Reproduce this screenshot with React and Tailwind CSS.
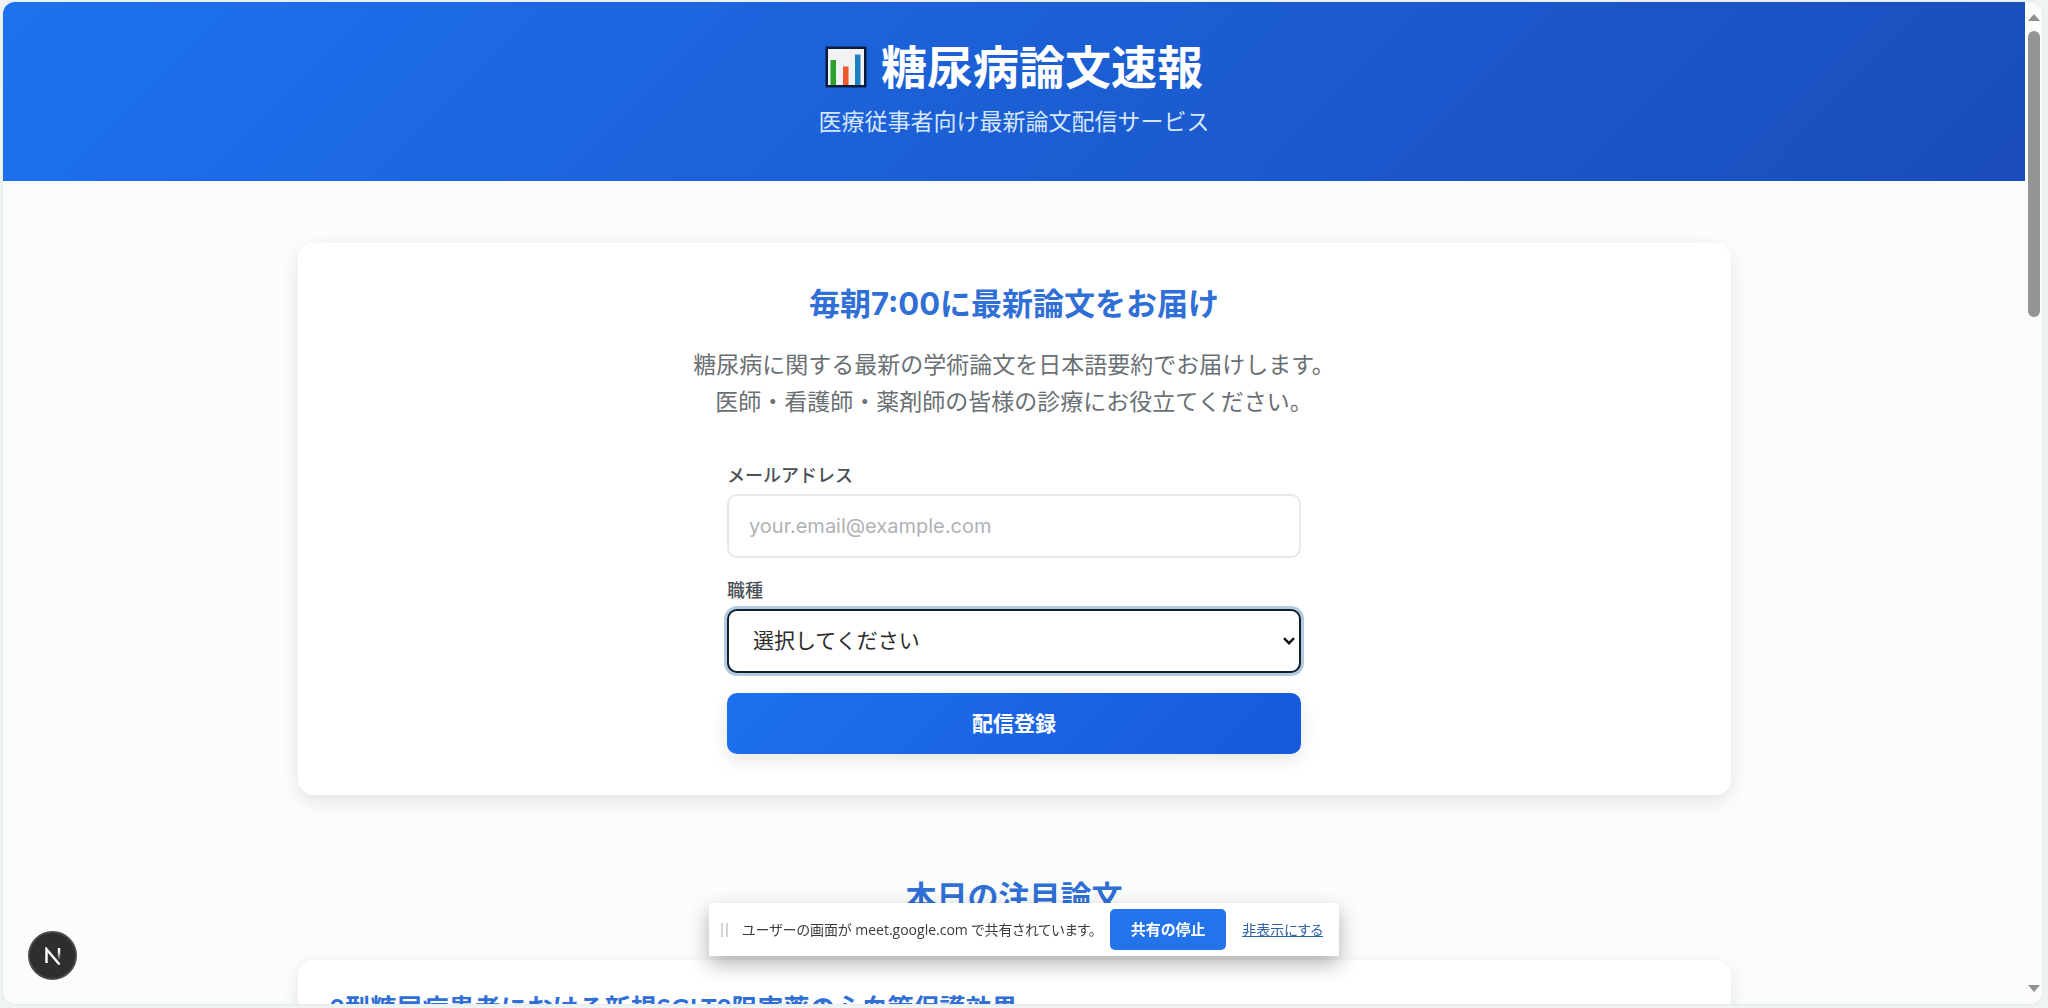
import React, { useState } from "react";

const ROLES = ["医師", "看護師", "薬剤師"];

function ChartIcon() {
  return (
    <svg viewBox="0 0 42 42" className="w-[42px] h-[42px] shrink-0" aria-hidden="true">
      <rect x="0.5" y="0.5" width="41" height="41" rx="1" fill="#0c1a3c" />
      <rect x="3" y="3" width="36" height="36" fill="#f1f2f3" />
      <rect x="5.5" y="14" width="5.5" height="25" fill="#2ca22c" />
      <rect x="18" y="20.5" width="5.5" height="18.5" fill="#f0592b" />
      <rect x="30" y="8.5" width="5.5" height="30.5" fill="#1a7fc4" />
    </svg>
  );
}

function Header() {
  return (
    <header className="bg-linear-135 from-[#1d72f0] to-[#1a4cba] pt-[41px] pb-[39px] text-center">
      <h1 className="flex items-center justify-center gap-[14px] text-[46px] leading-[48px] font-bold text-white">
        <ChartIcon />
        糖尿病論文速報
      </h1>
      <p className="mt-[11px] text-[23px] leading-[40px] text-[#d6e6fd]">医療従事者向け最新論文配信サービス</p>
    </header>
  );
}

function SignupForm() {
  const [email, setEmail] = useState("");
  const [role, setRole] = useState("");

  return (
    <form className="w-full max-w-[574px] mx-auto mt-[42px] flex flex-col gap-5" onSubmit={(e) => e.preventDefault()}>
      <div className="flex flex-col gap-[5px]">
        <label htmlFor="email" className="text-[18px] leading-[26px] font-medium text-[#4b5157]">メールアドレス</label>
        <input
          id="email"
          type="email"
          value={email}
          onChange={(e) => setEmail(e.target.value)}
          placeholder="your.email@example.com"
          className="h-16 w-full rounded-[10px] border-2 border-[#e6e8ea] bg-white px-5 text-[20px] text-gray-800 placeholder:text-[#b0b2b4] outline-none"
        />
      </div>

      <div className="flex flex-col gap-[5px]">
        <label htmlFor="role" className="text-[18px] leading-[26px] font-medium text-[#4b5157]">職種</label>
        <div className="relative">
          <select
            id="role"
            value={role}
            onChange={(e) => setRole(e.target.value)}
            className="block h-16 w-full appearance-none rounded-[10px] border-2 border-[#12202c] bg-white px-6 text-[21px] text-[#2b2b2b] ring-3 ring-[#b3cbe0] outline-none"
          >
            <option value="">選択してください</option>
            {ROLES.map((r) => (
              <option key={r} value={r}>{r}</option>
            ))}
          </select>
          <svg viewBox="0 0 12 8" className="pointer-events-none absolute right-[6px] top-7 w-3 h-2" fill="none" stroke="#111" strokeWidth="2.4">
            <path d="M1 1.2 6 6.2 11 1.2" />
          </svg>
        </div>
      </div>

      <button type="submit" className="h-[61px] rounded-[10px] bg-linear-135 from-[#1d70ee] to-[#1759dc] text-[21px] font-bold text-white shadow-[0_6px_18px_rgba(0,0,0,0.1)]">
        配信登録
      </button>
    </form>
  );
}

function ScrollBar() {
  return (
    <div className="w-[17px] shrink-0 bg-[#fcfcfc] flex flex-col items-center" aria-hidden="true">
      <svg viewBox="0 0 12 7" className="mt-3 w-3 h-[7px]"><path d="M6 0 12 7H0z" fill="#909090" /></svg>
      <div className="mt-[10px] h-[286px] w-3 rounded-full bg-[#939494]" />
      <svg viewBox="0 0 12 7" className="mt-auto mb-3 w-3 h-[7px]"><path d="M0 0H12L6 7z" fill="#909090" /></svg>
    </div>
  );
}

function ShareBar() {
  return (
    <div className="fixed bottom-[52px] left-1/2 -translate-x-1/2 flex h-[53px] w-[630px] items-center bg-white pl-3 font-['Open_Sans','Noto_Sans_CJK_JP',sans-serif] text-[14px] whitespace-nowrap shadow-[0_8px_20px_rgba(0,0,0,0.3)]">
      <div className="h-[14px] w-[7px] border-x-2 border-[#d4d4d4]" />
      <p className="ml-[14px] flex-1 text-[#3c3c3c] [font-feature-settings:'palt']">ユーザーの画面が meet.google.com で共有されています。</p>
      <button type="button" className="h-[41px] w-[116px] shrink-0 rounded-[5px] bg-[#2374ea] text-[15px] font-bold text-white [font-feature-settings:'palt']">共有の停止</button>
      <a href="#hide" className="mx-4 text-[#2f62a8] underline [font-feature-settings:'palt']">非表示にする</a>
    </div>
  );
}

export default function App() {
  return (
    <div className="h-screen overflow-hidden bg-[#f0f3f4] pt-[2px] pr-[6px] pb-1 pl-[3px] font-['Inter','Noto_Sans_CJK_JP',sans-serif]">
      <div className="flex h-full overflow-hidden rounded-xl bg-[#fbfdfb] shadow-[0_0_2px_rgba(0,0,0,0.12)]">
        <div className="flex-1 overflow-hidden">
          <Header />

          <main className="max-w-[1433px] mx-auto pt-[62px]">
            {/* Signup card */}
            <section className="rounded-2xl bg-white py-[41px] shadow-[0_6px_18px_rgba(0,0,0,0.1)]">
              <h2 className="text-center text-[31px] leading-[40px] font-bold text-[#2f6fd6]">毎朝7:00に最新論文をお届け</h2>
              <p className="mt-[23px] text-center text-[23px] leading-[37px] text-[#6a7073]">
                糖尿病に関する最新の学術論文を日本語要約でお届けします。
                <br />
                医師・看護師・薬剤師の皆様の診療にお役立てください。
              </p>
              <SignupForm />
            </section>

            {/* Today's papers */}
            <section className="mt-[82px]">
              <h2 className="text-center text-[31px] leading-[40px] font-bold text-[#2f6fd6]">本日の注目論文</h2>
              <article className="mt-[43px] rounded-2xl bg-white p-8 shadow-[0_6px_18px_rgba(0,0,0,0.1)]">
                <h3 className="font-['Lato','Noto_Sans_CJK_JP',sans-serif] text-[26px] leading-[32px] font-bold text-[#2f6fd6]">
                  2型糖尿病患者における新規SGLT2阻害薬の心血管保護効果
                </h3>
              </article>
            </section>
          </main>
        </div>
        <ScrollBar />
      </div>

      {/* Next.js dev badge */}
      <button type="button" aria-label="Next.js" className="fixed bottom-7 left-7 flex size-[49px] items-center justify-center rounded-full border-2 border-[#4a4c4c] bg-[#2d2f2f]">
        <svg viewBox="0 0 18 18" className="w-[18px] h-[18px]" fill="none" strokeWidth="2.4">
          <defs>
            <linearGradient id="leg" x1="0" y1="0" x2="0" y2="1">
              <stop offset="0.3" stopColor="#fff" />
              <stop offset="1" stopColor="#fff" stopOpacity="0" />
            </linearGradient>
          </defs>
          <path d="M2.5 16V2.2L15.5 17.5" stroke="#fff" />
          <rect x="13.8" y="1" width="2.4" height="12" fill="url(#leg)" />
        </svg>
      </button>

      <ShareBar />
    </div>
  );
}
